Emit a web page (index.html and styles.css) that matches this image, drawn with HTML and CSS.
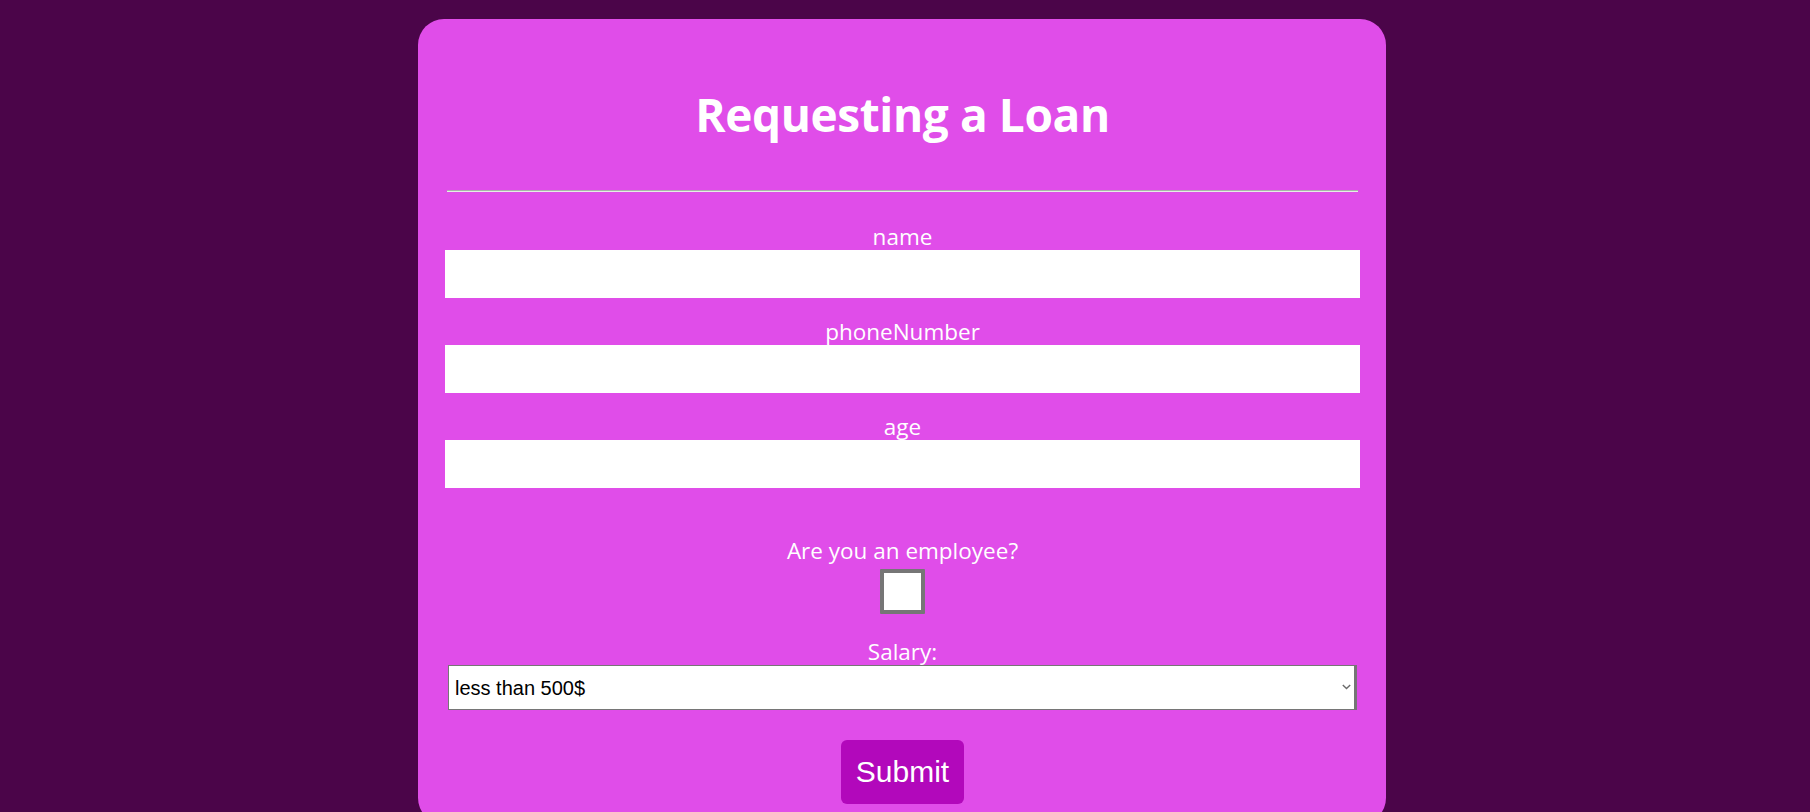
FILE: index.html
```html
<!DOCTYPE html>
<html lang="en">
<head>
<meta charset="utf-8">
<title>Requesting a Loan</title>
<link rel="stylesheet" href="styles.css">
</head>
<body>
<div class="card">
  <h1 class="title">Requesting a Loan</h1>
  <hr class="divider">
  <form class="form">
    <div class="field first">
      <label class="label" for="name">name</label>
      <input class="text-input" id="name" type="text">
    </div>
    <div class="field">
      <label class="label" for="phone">phoneNumber</label>
      <input class="text-input" id="phone" type="text">
    </div>
    <div class="field">
      <label class="label" for="age">age</label>
      <input class="text-input" id="age" type="text">
    </div>
    <div class="field employee">
      <label class="label" for="emp">Are you an employee?</label>
      <input class="check" id="emp" type="checkbox">
    </div>
    <div class="field salary">
      <label class="label" for="salary">Salary:</label>
      <div class="select-wrap">
        <select class="select" id="salary">
          <option>less than 500$</option>
          <option>500$ - 1000$</option>
          <option>more than 1000$</option>
        </select>
        <svg class="chevron" width="9" height="6" viewBox="0 0 9 6" aria-hidden="true">
          <path d="M0.8 1 L4.5 4.6 L8.2 1" fill="none" stroke="#6b6b6b" stroke-width="1.4"/>
        </svg>
      </div>
    </div>
    <button class="submit" type="button">Submit</button>
  </form>
</div>
</body>
</html>
```

FILE: styles.css
```css
html, body {
  margin: 0;
  padding: 0;
}
body {
  background: #4b0549;
  font-family: "Open Sans", "Noto Sans", sans-serif;
}
.card {
  width: 968px;
  box-sizing: border-box;
  margin: 19px 0 0 calc(50% - 487px);
  background: #e04de9;
  border-radius: 26px;
  padding: 63px 26px 20px 27px;
  display: flex;
  flex-direction: column;
  align-items: center;
}
.title {
  margin: 0;
  font-size: 46px;
  line-height: 64px;
  letter-spacing: -0.4px;
  font-weight: 700;
  color: #ffffff;
}
.divider {
  width: 911px;
  height: 0;
  margin: 44px 0 0;
  border: none;
  border-top: 1px solid #a9b3a9;
  border-bottom: 1px solid #e6efe6;
}
.form {
  width: 100%;
  margin-top: 31px;
  display: flex;
  flex-direction: column;
  align-items: center;
}
.field {
  width: 100%;
  display: flex;
  flex-direction: column;
  align-items: center;
  margin-top: 20px;
}
.field.first {
  margin-top: 0;
}
.field.employee {
  margin-top: 49px;
}
.field.salary {
  margin-top: 24px;
}
.label {
  font-size: 22.5px;
  line-height: 27px;
  color: #ffffff;
}
.text-input {
  display: block;
  width: 915px;
  height: 48px;
  box-sizing: border-box;
  border: none;
  background: #ffffff;
  margin: 0;
  padding: 0 8px;
  font-size: 20px;
}
.check {
  appearance: none;
  -webkit-appearance: none;
  width: 45px;
  height: 45px;
  box-sizing: border-box;
  margin: 5px 0 0;
  border: 4px solid #767676;
  background: #ffffff;
  border-radius: 1px;
}
.select-wrap {
  position: relative;
  width: 909px;
}
.select {
  appearance: none;
  -webkit-appearance: none;
  display: block;
  width: 100%;
  height: 45px;
  box-sizing: border-box;
  margin: 0;
  border: 1px solid #767676;
  border-right-width: 3px;
  border-radius: 0;
  background: #ffffff;
  color: #000000;
  font-family: "Liberation Sans", Arial, sans-serif;
  font-size: 20px;
  padding: 0 6px;
}
.chevron {
  position: absolute;
  right: 6px;
  top: 19px;
  pointer-events: none;
}
.submit {
  margin-top: 30px;
  height: 64px;
  padding: 0 15px;
  border: none;
  border-radius: 6px;
  background: #b208bb;
  color: #ffffff;
  font-family: "Liberation Sans", Arial, sans-serif;
  font-size: 30px;
  line-height: 34px;
}
```
